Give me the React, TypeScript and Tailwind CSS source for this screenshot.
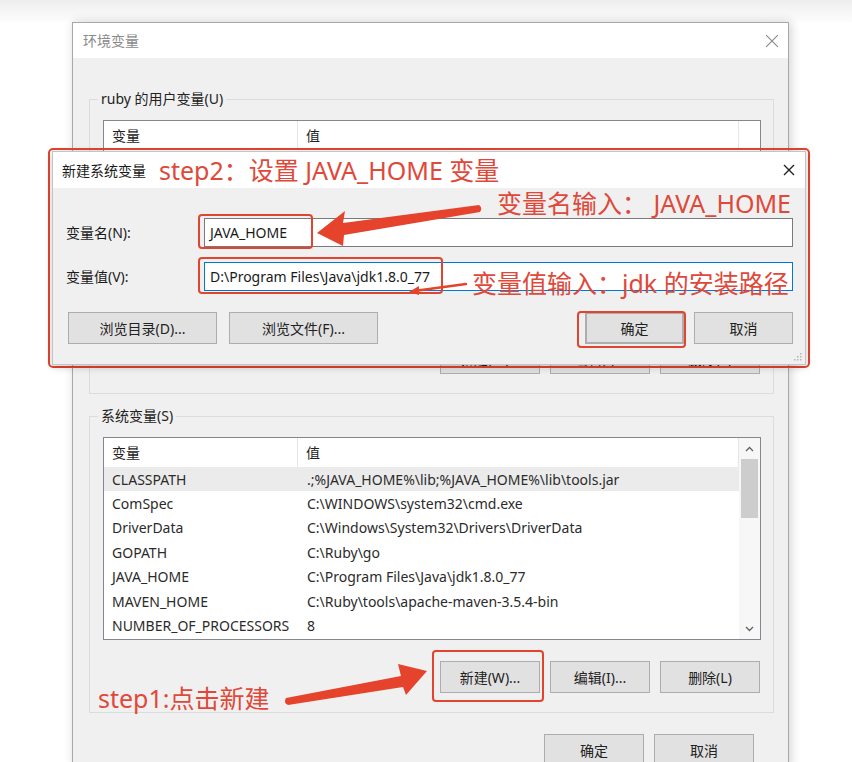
import React from "react";

const sysVars: [string, string][] = [
  ["CLASSPATH", ".;%JAVA_HOME%\\lib;%JAVA_HOME%\\lib\\tools.jar"],
  ["ComSpec", "C:\\WINDOWS\\system32\\cmd.exe"],
  ["DriverData", "C:\\Windows\\System32\\Drivers\\DriverData"],
  ["GOPATH", "C:\\Ruby\\go"],
  ["JAVA_HOME", "C:\\Program Files\\Java\\jdk1.8.0_77"],
  ["MAVEN_HOME", "C:\\Ruby\\tools\\apache-maven-3.5.4-bin"],
  ["NUMBER_OF_PROCESSORS", "8"],
];

function WinButton({ children, className = "" }: { children: React.ReactNode; className?: string }) {
  return (
    <div
      className={`flex h-[32px] items-center justify-center border border-[#adadad] bg-[#e1e1e1] text-[14px] text-[#222] ${className}`}
    >
      {children}
    </div>
  );
}

function ListHeader() {
  return (
    <div className="flex h-[29px] items-center text-[14px] text-[#222]">
      <div className="flex h-full w-[194px] items-center border-r border-[#e5e5e5] pl-[8px]">变量</div>
      <div className="flex h-full flex-1 items-center border-r border-[#e5e5e5] pl-[8px]">值</div>
    </div>
  );
}

function CloseX({ className, size, stroke }: { className: string; size: number; stroke: number }) {
  return (
    <svg width={size} height={size} viewBox="0 0 12 12" className={className}>
      <path d="M1 1L11 11M11 1L1 11" stroke="currentColor" strokeWidth={stroke} />
    </svg>
  );
}

export default function App() {
  return (
    <div className="relative h-[762px] w-[852px] overflow-hidden bg-white font-['Noto_Sans','Noto_Sans_CJK_SC',sans-serif]">
      <div className="h-[22px] bg-gradient-to-b from-[#eeeeee] to-[#fdfdfd]" />

      {/* 环境变量 window */}
      <div className="ml-[72px] w-[717px] border border-[#a8a8a8] bg-[#f0f0f0] shadow-[2px_0_10px_rgba(0,0,0,0.18)]">
        <div className="flex h-[35px] items-center justify-between bg-white pl-[10px] pr-[9px]">
          <span className="text-[14px] text-[#8a8a8a]">环境变量</span>
          <CloseX className="text-[#8a8a8a]" size={14} stroke={1} />
        </div>

        <div className="pl-[16px] pr-[14px] pt-[41px]">
          {/* user variables */}
          <div className="border border-[#dcdcdc] pb-[19px] pl-[13px] pr-[12px]">
            <div className="-mt-[11px] -ml-[5px] h-[20px] w-fit bg-[#f0f0f0] px-[3px] text-[14px] leading-[20px] text-[#222]">
              ruby 的用户变量(U)
            </div>
            <div className="mt-[11px] flex h-[201px] border border-[#828790] bg-white">
              <div className="flex-1">
                <ListHeader />
              </div>
              <div className="w-[21px]" />
            </div>
            <div className="mt-[21px] flex justify-end gap-[10px] pr-[1px]">
              <WinButton className="w-[100px]">新建(W)...</WinButton>
              <WinButton className="w-[100px]">编辑(I)...</WinButton>
              <WinButton className="w-[100px]">删除(L)</WinButton>
            </div>
          </div>

          {/* system variables */}
          <div className="mt-[22px] border border-[#dcdcdc] pb-[19px] pl-[13px] pr-[12px]">
            <div className="-mt-[11px] -ml-[5px] h-[20px] w-fit bg-[#f0f0f0] px-[3px] text-[14px] leading-[20px] text-[#222]">
              系统变量(S)
            </div>
            <div className="mt-[11px] flex h-[203px] border border-[#828790] bg-white">
              <div className="flex-1">
                <ListHeader />
                {sysVars.map(([name, value], i) => (
                  <div
                    key={name}
                    className={`flex h-[24.4px] items-center text-[14px] text-[#2b2b2b] ${i === 0 ? "bg-[#ebebeb]" : ""}`}
                  >
                    <div className="w-[194px] whitespace-nowrap pl-[8px]">{name}</div>
                    <div className="flex-1 whitespace-nowrap pl-[9px]">{value}</div>
                  </div>
                ))}
              </div>
              <div className="flex w-[21px] flex-col items-center bg-[#f7f7f7]">
                <div className="flex h-[21px] items-center justify-center">
                  <svg width="9" height="6" viewBox="0 0 9 6">
                    <path d="M1 5L4.5 1.5L8 5" fill="none" stroke="#606060" strokeWidth="1.3" />
                  </svg>
                </div>
                <div className="h-[59px] w-[17px] bg-[#cdcdcd]" />
                <div className="flex-1" />
                <div className="flex h-[21px] items-center justify-center">
                  <svg width="9" height="6" viewBox="0 0 9 6">
                    <path d="M1 1L4.5 4.5L8 1" fill="none" stroke="#606060" strokeWidth="1.3" />
                  </svg>
                </div>
              </div>
            </div>
            <div className="mt-[21px] flex justify-end gap-[10px] pr-[1px]">
              <WinButton className="w-[100px]">新建(W)...</WinButton>
              <WinButton className="w-[100px]">编辑(I)...</WinButton>
              <WinButton className="w-[100px]">删除(L)</WinButton>
            </div>
          </div>

          <div className="mt-[21px] flex justify-end gap-[10px] pr-[20px]">
            <WinButton className="w-[100px]">确定</WinButton>
            <WinButton className="w-[100px]">取消</WinButton>
          </div>
        </div>
      </div>

      {/* 新建系统变量 dialog, framed in red */}
      <div className="absolute left-[48px] top-[148px] h-[220px] w-[762px] rounded-[5px] border-2 border-[#e2452f] px-[2px] py-[1px]">
        <div className="relative h-full border border-[#c4c4c4] bg-[#f0f0f0] shadow-[0_2px_8px_rgba(0,0,0,0.2)]">
          <div className="flex h-[36px] items-center bg-white pl-[9px] pr-[10px]">
            <span className="text-[14px] text-[#1a1a1a]">新建系统变量</span>
            <span className="ml-[13px] text-[25px] leading-[30px] text-[#e0483a]">step2：设置 JAVA_HOME 变量</span>
            <CloseX className="ml-auto text-[#222]" size={12} stroke={1.4} />
          </div>

          <div className="pl-[13px] pr-[12px] pt-[30px]">
            <div className="flex h-[29px] items-center">
              <div className="w-[138px] text-[14px] text-[#1a1a1a]">变量名(N):</div>
              <div className="flex h-full flex-1 items-center border border-[#7a7a7a] bg-white pl-[5px] text-[14px] text-[#1a1a1a]">
                JAVA_HOME
              </div>
            </div>
            <div className="mt-[15px] flex h-[29px] items-center">
              <div className="w-[138px] text-[14px] text-[#1a1a1a]">变量值(V):</div>
              <div className="flex h-full flex-1 items-center border border-[#0078d7] bg-white pl-[5px] text-[14px] text-[#1a1a1a]">
                D:\Program Files\Java\jdk1.8.0_77
              </div>
            </div>
            <div className="mt-[21px] flex items-center pl-[2px]">
              <WinButton className="w-[149px]">浏览目录(D)...</WinButton>
              <WinButton className="ml-[12px] w-[149px]">浏览文件(F)...</WinButton>
              <WinButton className="ml-auto w-[99px] border-2 border-[#0078d7]">确定</WinButton>
              <WinButton className="ml-[10px] w-[99px]">取消</WinButton>
            </div>
          </div>

          <svg width="8" height="8" viewBox="0 0 8 8" className="absolute bottom-[3px] right-[3px]">
            <rect x="6" y="0" width="1.5" height="1.5" fill="#b5b5b5" />
            <rect x="3" y="3" width="1.5" height="1.5" fill="#b5b5b5" />
            <rect x="6" y="3" width="1.5" height="1.5" fill="#b5b5b5" />
            <rect x="0" y="6" width="1.5" height="1.5" fill="#b5b5b5" />
            <rect x="3" y="6" width="1.5" height="1.5" fill="#b5b5b5" />
            <rect x="6" y="6" width="1.5" height="1.5" fill="#b5b5b5" />
          </svg>
        </div>
      </div>

      {/* annotations */}
      <div className="absolute left-[497px] top-[188px] whitespace-nowrap text-[25px] leading-[30px] text-[#e0483a]">
        变量名输入： JAVA_HOME
      </div>
      <div className="absolute left-[472px] top-[268px] whitespace-nowrap text-[25px] leading-[30px] text-[#e0483a]">
        变量值输入：jdk 的安装路径
      </div>
      <div className="absolute left-[98px] top-[683px] whitespace-nowrap text-[25px] leading-[30px] text-[#e0483a]">
        step1:点击新建
      </div>

      <div className="absolute left-[198px] top-[214px] h-[35px] w-[115px] rounded-[4px] border-2 border-[#e2452f]" />
      <div className="absolute left-[198px] top-[257px] h-[37px] w-[245px] rounded-[4px] border-2 border-[#e2452f]" />
      <div className="absolute left-[577px] top-[311px] h-[37px] w-[109px] rounded-[4px] border-2 border-[#e2452f]" />
      <div className="absolute left-[432px] top-[650px] h-[52px] w-[112px] rounded-[4px] border-2 border-[#e2452f]" />

      <svg width="852" height="762" viewBox="0 0 852 762" className="pointer-events-none absolute left-0 top-0">
        {/* name arrow */}
        <path d="M317 233 L345 211 L343 223 L479 205 Q483 208 480 212 L344 235 L343 246 Z" fill="#e5432c" />
        {/* value arrow */}
        <path d="M466 284 L414 291" stroke="#e5432c" strokeWidth="2.5" strokeLinecap="round" />
        <path d="M409 292 L419 286 L419 295 Z" fill="#e5432c" />
        {/* step1 arrow */}
        <path d="M427 671 L398 664 L401 676 L286 698 Q283 703 288 705 L403 687 L406 695 Z" fill="#e5432c" />
      </svg>
    </div>
  );
}
